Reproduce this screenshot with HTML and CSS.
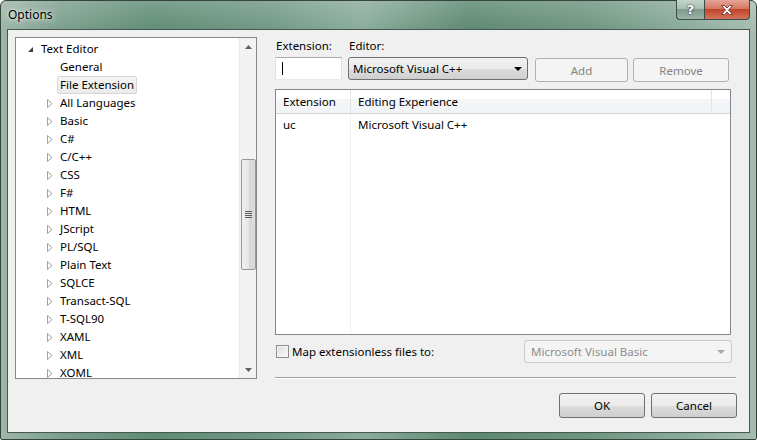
FILE: index.html
```html
<!DOCTYPE html>
<html>
<head>
<meta charset="utf-8">
<link rel="stylesheet" href="styles.css">
</head>
<body>
<div class="window">
  <div class="titlebar">
    <span class="title">Options</span>
    <div class="caption-btns">
      <div class="cbtn help">?</div>
      <div class="cbtn close">
        <svg width="14" height="10" viewBox="0 0 14 10"><path d="M1.5 0.5h3l2.5 2.5 2.5-2.5h3l-4 4.5 4 4.5h-3l-2.5-2.5-2.5 2.5h-3l4-4.5z" fill="#fff" stroke="#6b2a22" stroke-width="0.8"/></svg>
      </div>
    </div>
  </div>
  <div class="client">
    <div class="tree">
      <div class="tree-items">
        <div class="node lvl0"><span class="exp"><svg width="7" height="7" viewBox="0 0 7 7"><path d="M6 1v5H1z" fill="#404040"/></svg></span><span class="label">Text Editor</span></div>
        <div class="node lvl1"><span class="exp"></span><span class="label">General</span></div>
        <div class="node lvl1"><span class="exp"></span><span class="label selected">File Extension</span></div>
        <div class="node lvl1"><span class="exp"><svg width="6" height="9" viewBox="0 0 6 9"><path d="M0.5 0.5l4.5 4-4.5 4z" fill="none" stroke="#a0a0a0"/></svg></span><span class="label">All Languages</span></div>
        <div class="node lvl1"><span class="exp"><svg width="6" height="9" viewBox="0 0 6 9"><path d="M0.5 0.5l4.5 4-4.5 4z" fill="none" stroke="#a0a0a0"/></svg></span><span class="label">Basic</span></div>
        <div class="node lvl1"><span class="exp"><svg width="6" height="9" viewBox="0 0 6 9"><path d="M0.5 0.5l4.5 4-4.5 4z" fill="none" stroke="#a0a0a0"/></svg></span><span class="label">C#</span></div>
        <div class="node lvl1"><span class="exp"><svg width="6" height="9" viewBox="0 0 6 9"><path d="M0.5 0.5l4.5 4-4.5 4z" fill="none" stroke="#a0a0a0"/></svg></span><span class="label">C/C++</span></div>
        <div class="node lvl1"><span class="exp"><svg width="6" height="9" viewBox="0 0 6 9"><path d="M0.5 0.5l4.5 4-4.5 4z" fill="none" stroke="#a0a0a0"/></svg></span><span class="label">CSS</span></div>
        <div class="node lvl1"><span class="exp"><svg width="6" height="9" viewBox="0 0 6 9"><path d="M0.5 0.5l4.5 4-4.5 4z" fill="none" stroke="#a0a0a0"/></svg></span><span class="label">F#</span></div>
        <div class="node lvl1"><span class="exp"><svg width="6" height="9" viewBox="0 0 6 9"><path d="M0.5 0.5l4.5 4-4.5 4z" fill="none" stroke="#a0a0a0"/></svg></span><span class="label">HTML</span></div>
        <div class="node lvl1"><span class="exp"><svg width="6" height="9" viewBox="0 0 6 9"><path d="M0.5 0.5l4.5 4-4.5 4z" fill="none" stroke="#a0a0a0"/></svg></span><span class="label">JScript</span></div>
        <div class="node lvl1"><span class="exp"><svg width="6" height="9" viewBox="0 0 6 9"><path d="M0.5 0.5l4.5 4-4.5 4z" fill="none" stroke="#a0a0a0"/></svg></span><span class="label">PL/SQL</span></div>
        <div class="node lvl1"><span class="exp"><svg width="6" height="9" viewBox="0 0 6 9"><path d="M0.5 0.5l4.5 4-4.5 4z" fill="none" stroke="#a0a0a0"/></svg></span><span class="label">Plain Text</span></div>
        <div class="node lvl1"><span class="exp"><svg width="6" height="9" viewBox="0 0 6 9"><path d="M0.5 0.5l4.5 4-4.5 4z" fill="none" stroke="#a0a0a0"/></svg></span><span class="label">SQLCE</span></div>
        <div class="node lvl1"><span class="exp"><svg width="6" height="9" viewBox="0 0 6 9"><path d="M0.5 0.5l4.5 4-4.5 4z" fill="none" stroke="#a0a0a0"/></svg></span><span class="label">Transact-SQL</span></div>
        <div class="node lvl1"><span class="exp"><svg width="6" height="9" viewBox="0 0 6 9"><path d="M0.5 0.5l4.5 4-4.5 4z" fill="none" stroke="#a0a0a0"/></svg></span><span class="label">T-SQL90</span></div>
        <div class="node lvl1"><span class="exp"><svg width="6" height="9" viewBox="0 0 6 9"><path d="M0.5 0.5l4.5 4-4.5 4z" fill="none" stroke="#a0a0a0"/></svg></span><span class="label">XAML</span></div>
        <div class="node lvl1"><span class="exp"><svg width="6" height="9" viewBox="0 0 6 9"><path d="M0.5 0.5l4.5 4-4.5 4z" fill="none" stroke="#a0a0a0"/></svg></span><span class="label">XML</span></div>
        <div class="node lvl1"><span class="exp"><svg width="6" height="9" viewBox="0 0 6 9"><path d="M0.5 0.5l4.5 4-4.5 4z" fill="none" stroke="#a0a0a0"/></svg></span><span class="label">XOML</span></div>
      </div>
      <div class="vscroll">
        <div class="sarrow"><svg width="7" height="4" viewBox="0 0 7 4"><path d="M0 4L3.5 0 7 4z" fill="#606060"/></svg></div>
        <div class="track"><div class="thumb"><div class="grip"></div></div></div>
        <div class="sarrow"><svg width="7" height="4" viewBox="0 0 7 4"><path d="M0 0h7L3.5 4z" fill="#606060"/></svg></div>
      </div>
    </div>
    <div class="panel">
      <div class="labels">
        <span class="lbl-ext">Extension:</span>
        <span>Editor:</span>
      </div>
      <div class="inputs">
        <div class="textbox"><span class="caret"></span></div>
        <div class="combo">
          <span>Microsoft Visual C++</span>
          <svg width="8" height="4" viewBox="0 0 8 4"><path d="M0 0h8L4 4z" fill="#000"/></svg>
        </div>
        <div class="btn disabled add">Add</div>
        <div class="btn disabled remove">Remove</div>
      </div>
      <div class="listview">
        <div class="lv-header">
          <div class="col c1">Extension</div>
          <div class="col c2">Editing Experience</div>
          <div class="col c3"></div>
        </div>
        <div class="lv-body">
          <div class="lv-row">
            <div class="cell c1">uc</div>
            <div class="cell c2">Microsoft Visual C++</div>
          </div>
        </div>
      </div>
      <div class="maprow">
        <div class="check"><span class="box"></span><span>Map extensionless files to:</span></div>
        <div class="combo dis">
          <span>Microsoft Visual Basic</span>
          <svg width="8" height="4" viewBox="0 0 8 4"><path d="M0 0h8L4 4z" fill="#a8a8a8"/></svg>
        </div>
      </div>
      <div class="sep"></div>
      <div class="footer">
        <div class="btn ok">OK</div>
        <div class="btn cancel">Cancel</div>
      </div>
    </div>
  </div>
</div>
</body>
</html>
```

FILE: styles.css
```css
html, body {
  margin: 0;
  padding: 0;
  width: 757px;
  height: 440px;
  overflow: hidden;
  background: #fff;
}
body {
  font-family: "Noto Sans", "Open Sans", sans-serif;
  font-size: 11.5px;
  color: #000;
}
.window {
  box-sizing: border-box;
  width: 757px;
  height: 440px;
  border: 1px solid #34463c;
  border-radius: 6px 6px 2px 2px;
  padding: 0 6px 6px 6px;
  display: flex;
  flex-direction: column;
  background:
    linear-gradient(to bottom, rgba(255,255,255,0.18), rgba(255,255,255,0) 30px),
    linear-gradient(to right, #9db6a9 0%, #7b9f8d 8%, #5f8c75 20%, #6f9784 35%, #8aac9b 48%, #5c8871 62%, #6e9580 78%, #8eae9e 92%, #a5bdb1 100%);
}
.titlebar {
  height: 28px;
  display: flex;
  align-items: flex-start;
  flex-shrink: 0;
}
.title {
  padding-left: 1px;
  margin-top: 6px;
  font-size: 12px;
  line-height: 16px;
  color: #000;
  text-shadow: 0 0 6px rgba(255,255,255,0.9), 0 0 3px rgba(255,255,255,0.8);
}
.caption-btns {
  margin-left: auto;
  display: flex;
  margin-top: -1px;
}
.cbtn {
  box-sizing: border-box;
  height: 20px;
  border: 1px solid #3d4c45;
  border-top: none;
  display: flex;
  align-items: center;
  justify-content: center;
}
.help {
  width: 28px;
  border-radius: 0 0 0 4px;
  border-right: none;
  background: linear-gradient(to bottom, #c3d3cb 0%, #a9bfb4 45%, #7f9b8d 50%, #9ab4a7 100%);
  color: #fff;
  font-family: "DejaVu Sans", sans-serif;
  font-weight: bold;
  font-size: 13px;
  text-shadow: 0 0 2px #333, 0 0 1px #333;
}
.close {
  width: 46px;
  border-radius: 0 0 4px 0;
  background: linear-gradient(to bottom, #e4a597 0%, #d47863 45%, #c0452b 50%, #d2745c 100%);
}
.client {
  flex: 1;
  box-sizing: border-box;
  border: 1px solid #46594f;
  background: #f0f0f0;
  padding: 7px 7px 0 7px;
  display: flex;
  align-items: flex-start;
}
.tree {
  box-sizing: border-box;
  width: 242px;
  height: 342px;
  border: 1px solid #828790;
  background: #fff;
  display: flex;
  flex-shrink: 0;
}
.tree-items {
  flex: 1;
  padding-top: 2px;
  overflow: hidden;
}
.node {
  height: 18px;
  display: flex;
  align-items: center;
  white-space: nowrap;
}
.node .exp {
  height: 18px;
  display: flex;
  align-items: center;
  justify-content: center;
  flex-shrink: 0;
}
.lvl0 { padding-left: 10px; }
.lvl0 .exp { width: 8px; margin-right: 7px; }
.lvl1 { padding-left: 29px; }
.lvl1 .exp { width: 10px; margin-right: 5px; }
.label {
  box-sizing: border-box;
  height: 18px;
  line-height: 16px;
  padding: 0 2px;
  border: 1px solid transparent;
  margin-left: -3px;
}
.label.selected {
  background: linear-gradient(to bottom, #f4f4f4, #ebebeb);
  border-color: #d6d6d6;
  border-radius: 2px;
}
.vscroll {
  width: 17px;
  display: flex;
  flex-direction: column;
  background: #f3f3f3;
  border-left: 1px solid #eaeaea;
  box-sizing: border-box;
}
.sarrow {
  height: 17px;
  display: flex;
  align-items: center;
  justify-content: center;
  flex-shrink: 0;
}
.track {
  flex: 1;
  padding-top: 104px;
  display: flex;
  justify-content: center;
}
.thumb {
  box-sizing: border-box;
  width: 15px;
  height: 111px;
  border: 1px solid #979797;
  border-radius: 2px;
  background: linear-gradient(to right, #f0f0f0 0%, #e6e6e6 50%, #d8d8d8 51%, #dcdcdc 100%);
  display: flex;
  align-items: center;
  justify-content: center;
}
.grip {
  width: 7px;
  height: 7px;
  background: repeating-linear-gradient(to bottom, #5a5a5a 0, #5a5a5a 1px, transparent 1px, transparent 2px);
}
.panel {
  margin-left: 18px;
  width: 462px;
  display: flex;
  flex-direction: column;
}
.labels {
  margin-top: 1px;
  height: 15px;
  line-height: 15px;
  display: flex;
  padding-left: 1px;
}
.lbl-ext { width: 73px; }
.inputs {
  margin-top: 4px;
  display: flex;
  align-items: flex-start;
}
.textbox {
  box-sizing: border-box;
  width: 67px;
  height: 23px;
  border: 1px solid #abadb3;
  border-right-color: #dbdfe6;
  border-bottom-color: #e3e9ef;
  border-left-color: #e2e3ea;
  background: #fff;
  padding: 4px 0 0 6px;
}
.caret {
  display: block;
  width: 1px;
  height: 13px;
  background: #000;
}
.combo {
  box-sizing: border-box;
  width: 180px;
  height: 23px;
  margin-left: 6px;
  border: 1px solid #707070;
  border-radius: 3px;
  background: linear-gradient(to bottom, #f2f2f2 0%, #ebebeb 50%, #dddddd 51%, #cfcfcf 100%);
  display: flex;
  align-items: center;
  justify-content: space-between;
  padding: 0 5px 0 4px;
}
.btn {
  box-sizing: border-box;
  height: 24px;
  border: 1px solid #707070;
  border-radius: 3px;
  background: linear-gradient(to bottom, #f2f2f2 0%, #ebebeb 50%, #dddddd 51%, #cfcfcf 100%);
  display: flex;
  align-items: center;
  justify-content: center;
}
.btn.disabled {
  border-color: #adb2b5;
  background: #f4f4f4;
  color: #838383;
}
.add { width: 93px; margin-left: 7px; margin-top: 1px; }
.remove { width: 96px; margin-left: 5px; margin-top: 1px; }
.listview {
  box-sizing: border-box;
  margin-top: 7px;
  width: 456px;
  height: 246px;
  border: 1px solid #828790;
  background: #fff;
  display: flex;
  flex-direction: column;
}
.lv-header {
  height: 24px;
  display: flex;
  background: linear-gradient(to bottom, #ffffff 0%, #ffffff 40%, #f5f6f7 41%, #f2f3f4 100%);
  border-bottom: 1px solid #d5d5d5;
  box-sizing: border-box;
}
.col {
  box-sizing: border-box;
  height: 100%;
  border-right: 1px solid #e3e4e5;
  display: flex;
  align-items: center;
  padding-left: 7px;
}
.c1 { width: 75px; }
.c2 { width: 361px; }
.c3 { flex: 1; border-right: none; }
.lv-body {
  flex: 1;
  display: flex;
  flex-direction: column;
  background: linear-gradient(to right, transparent 74px, #f1f1f1 74px, #f1f1f1 75px, transparent 75px);
}
.lv-row {
  height: 20px;
  display: flex;
  align-items: center;
}
.cell { padding-left: 7px; box-sizing: border-box; }
.maprow {
  margin-top: 5px;
  display: flex;
  align-items: center;
  justify-content: space-between;
}
.check {
  display: flex;
  align-items: center;
  padding-left: 1px;
}
.box {
  box-sizing: border-box;
  width: 13px;
  height: 13px;
  border: 1px solid #8e8f8f;
  background: linear-gradient(135deg, #dcdcdc, #fbfbfb);
  box-shadow: inset 0 0 0 1px #f4f4f4;
  margin-right: 3px;
}
.combo.dis {
  width: 208px;
  margin-left: 0;
  margin-right: 5px;
  border-color: #c9c9c9;
  background: #f4f4f4;
  color: #8d8d8d;
  padding-left: 6px;
  padding-right: 6px;
}
.sep {
  margin-top: 14px;
  width: 461px;
  height: 1px;
  background: #a0a0a0;
  border-bottom: 1px solid #fff;
}
.footer {
  margin-top: 14px;
  display: flex;
  justify-content: flex-end;
  gap: 6px;
}
.ok, .cancel { width: 86px; height: 25px; }
```
